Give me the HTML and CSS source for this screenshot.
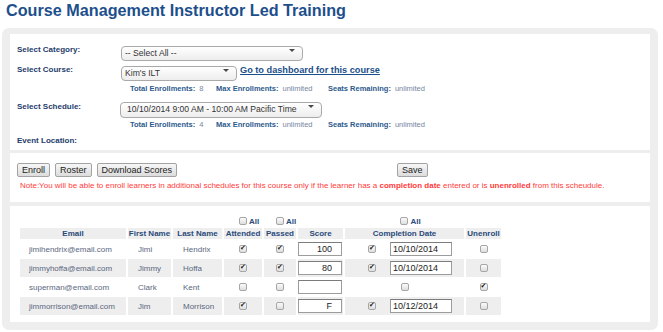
FILE: index.html
```html
<!DOCTYPE html>
<html>
<head>
<meta charset="utf-8">
<title>Course Management Instructor Led Training</title>
<link rel="stylesheet" href="styles.css">
</head>
<body>
<h1 class="title">Course Management Instructor Led Training</h1>
<div class="panel">
  <div class="section s-form">
    <div class="row r-cat">
      <label class="lbl">Select Category:</label>
      <span class="selwrap w-cat"><select class="sel"><option>-- Select All --</option></select></span>
    </div>
    <div class="row r-course">
      <label class="lbl">Select Course:</label>
      <span class="selwrap w-course"><select class="sel"><option>Kim's ILT</option></select></span>
      <a class="dash" href="#">Go to dashboard for this course</a>
    </div>
    <div class="totals t1">
      <span class="grp g1"><span class="tl">Total Enrollments:</span><span class="tv">8</span></span>
      <span class="grp g2"><span class="tl">Max Enrollments:</span><span class="tv">unlimited</span></span>
      <span class="grp"><span class="tl">Seats Remaining:</span><span class="tv">unlimited</span></span>
    </div>
    <div class="row r-sched">
      <label class="lbl">Select Schedule:</label>
      <span class="selwrap w-sched"><select class="sel sched"><option>10/10/2014 9:00 AM - 10:00 AM Pacific Time</option></select></span>
    </div>
    <div class="totals t2">
      <span class="grp g1"><span class="tl">Total Enrollments:</span><span class="tv">4</span></span>
      <span class="grp g2"><span class="tl">Max Enrollments:</span><span class="tv">unlimited</span></span>
      <span class="grp"><span class="tl">Seats Remaining:</span><span class="tv">unlimited</span></span>
    </div>
    <div class="row r-event">
      <label class="lbl">Event Location:</label>
    </div>
  </div>

  <div class="section s-actions">
    <div class="btnrow">
      <button class="btn">Enroll</button>
      <button class="btn">Roster</button>
      <button class="btn">Download Scores</button>
      <button class="btn save">Save</button>
    </div>
    <p class="note">Note:You will be able to enroll learners in additional schedules for this course only if the learner has a <b>completion date</b> entered or is <b>unenrolled</b> from this scheudule.</p>
  </div>

  <div class="section s-table">
    <table class="grid">
      <colgroup>
        <col class="c-email"><col class="c-first"><col class="c-last"><col class="c-att"><col class="c-pass"><col class="c-score"><col class="c-date"><col class="c-un">
      </colgroup>
      <tr class="allrow">
        <td></td><td></td><td></td>
        <td class="all"><input type="checkbox" class="cb"><span>All</span></td>
        <td class="all"><input type="checkbox" class="cb"><span>All</span></td>
        <td></td>
        <td class="all"><input type="checkbox" class="cb"><span>All</span></td>
        <td></td>
      </tr>
      <tr class="head">
        <th>Email</th><th>First Name</th><th>Last Name</th><th>Attended</th><th>Passed</th><th>Score</th><th>Completion Date</th><th>Unenroll</th>
      </tr>
      <tr class="data">
        <td class="txt em">jimihendrix@email.com</td><td class="txt">Jimi</td><td class="txt">Hendrix</td>
        <td class="ctr"><input type="checkbox" class="cb" checked></td>
        <td class="ctr"><input type="checkbox" class="cb" checked></td>
        <td><input class="score" type="text" value="100"></td>
        <td class="dt"><input type="checkbox" class="cb" checked><input class="date" type="text" value="10/10/2014"></td>
        <td class="ctr"><input type="checkbox" class="cb"></td>
      </tr>
      <tr class="data alt">
        <td class="txt em">jimmyhoffa@email.com</td><td class="txt">Jimmy</td><td class="txt">Hoffa</td>
        <td class="ctr"><input type="checkbox" class="cb" checked></td>
        <td class="ctr"><input type="checkbox" class="cb" checked></td>
        <td><input class="score" type="text" value="80"></td>
        <td class="dt"><input type="checkbox" class="cb" checked><input class="date" type="text" value="10/10/2014"></td>
        <td class="ctr"><input type="checkbox" class="cb"></td>
      </tr>
      <tr class="data">
        <td class="txt em">superman@email.com</td><td class="txt">Clark</td><td class="txt">Kent</td>
        <td class="ctr"><input type="checkbox" class="cb"></td>
        <td class="ctr"><input type="checkbox" class="cb"></td>
        <td><input class="score" type="text" value=""></td>
        <td class="ctr"><input type="checkbox" class="cb"></td>
        <td class="ctr"><input type="checkbox" class="cb" checked></td>
      </tr>
      <tr class="data alt">
        <td class="txt em">jimmorrison@email.com</td><td class="txt">Jim</td><td class="txt">Morrison</td>
        <td class="ctr"><input type="checkbox" class="cb" checked></td>
        <td class="ctr"><input type="checkbox" class="cb"></td>
        <td><input class="score" type="text" value="F"></td>
        <td class="dt"><input type="checkbox" class="cb" checked><input class="date" type="text" value="10/12/2014"></td>
        <td class="ctr"><input type="checkbox" class="cb"></td>
      </tr>
    </table>
  </div>
</div>
</body>
</html>
```
FILE: styles.css
```css
* { box-sizing: border-box; }
html, body { margin: 0; padding: 0; background: #fff; }
body {
  font-family: "Liberation Sans", Arial, sans-serif;
  width: 663px;
  color: #333;
}
.title {
  margin: 0 0 8px 0;
  padding: 0 0 0 6px;
  font-size: 16.2px;
  line-height: 20px;
  font-weight: bold;
  color: #1d4f8c;
}
.panel {
  margin-left: 2px;
  width: 656px;
  background: #eeeeee;
  border-radius: 7px;
  padding: 6px 8px 8px 8px;
}
.section { background: #fff; }
.s-actions { margin-top: 3px; }
.s-table { margin-top: 4px; }

/* form section */
.s-form { padding: 8px 7px 5px 7px; height: 116px; }
.row { display: flex; align-items: center; }
.lbl {
  width: 104px;
  flex: none;
  font-size: 8px;
  font-weight: bold;
  color: #1f3d6b;
}
.r-cat { height: 15px; }
.r-course { height: 15px; margin-top: 5px; }
.r-sched { height: 16px; margin-top: 4px; }
.r-event { height: 10px; margin-top: 5px; }
.selwrap { position: relative; display: block; height: 100%; }
.selwrap::after {
  content: "";
  position: absolute;
  right: 8px;
  top: 50%;
  margin-top: -1px;
  border-left: 3px solid transparent;
  border-right: 3px solid transparent;
  border-top: 3px solid #4a4a4a;
}
.w-cat { width: 182px; }
.w-course { width: 116px; }
.w-sched { width: 202px; margin-left: -1px; }
.sel {
  -webkit-appearance: none;
  appearance: none;
  width: 100%;
  height: 100%;
  margin: 0;
  border: 1px solid #a9a9a9;
  border-radius: 4px;
  background: linear-gradient(#ffffff, #ededed);
  font-family: "Liberation Sans", Arial, sans-serif;
  font-size: 8.6px;
  color: #333;
  padding: 0 0 0 3px;
  line-height: 13px;
}
.sel.sched { padding-left: 6px; }
.dash {
  margin-left: 3px;
  font-size: 9.2px;
  font-weight: bold;
  color: #1a4f8a;
  text-decoration: underline;
}
.totals {
  margin-left: 113px;
  height: 10px;
  line-height: 10px;
  font-size: 7.5px;
  display: flex;
  align-items: center;
  white-space: nowrap;
}
.t1 { margin-top: 7px; }
.t2 { margin-top: 6px; }
.grp { display: block; flex: none; }
.g1 { width: 86px; }
.g2 { width: 112px; }
.tl { font-weight: bold; color: #2c5a8c; margin-right: 4px; }
.tv { color: #7686a0; }

/* actions section */
.s-actions { padding: 10px 7px 0 7px; height: 49px; }
.btnrow { display: flex; height: 14px; }
.btn {
  height: 14px;
  margin: 0 5px 0 0;
  padding: 0 4px;
  border: 1px solid #a3a3a3;
  border-radius: 2px;
  background: linear-gradient(#f7f7f7, #dcdcdc);
  font-family: "Liberation Sans", Arial, sans-serif;
  font-size: 9px;
  line-height: 12px;
  color: #222;
}
.btn.save { margin-left: 215px; }
.note {
  margin: 4px 0 0 3px;
  font-size: 8px;
  line-height: 10px;
  color: #ff3b3b;
}

/* table section */
.s-table { padding: 8px 0 6px 8px; height: 116px; }
.grid {
  table-layout: fixed;
  width: 485px;
  border-collapse: separate;
  border-spacing: 2px 1px;
  font-size: 8px;
}
.c-email { width: 106px; }
.c-first { width: 43px; }
.c-last { width: 49px; }
.c-att { width: 38px; }
.c-pass { width: 32px; }
.c-score { width: 45px; }
.c-date { width: 119px; }
.c-un { width: 35px; }
.grid td, .grid th { padding: 0; vertical-align: middle; }
.allrow td { height: 12px; }
.all {
  text-align: center;
  padding-left: 12px !important;
  white-space: nowrap;
  font-weight: bold;
  color: #2a4a7a;
}
.all span { margin-left: 2px; vertical-align: middle; }
.head th {
  height: 11px;
  background: #eeeeee;
  font-weight: bold;
  color: #2a4a7a;
  text-align: center;
  white-space: nowrap;
  line-height: 11px;
}
.data td { height: 18px; }
.data.alt td { background: #eeeeee; }
.txt { padding-left: 10px !important; color: #5a6780; white-space: nowrap; }
.txt.em { padding-left: 9px !important; }
.ctr { text-align: center; }
.dt { padding-left: 23px !important; white-space: nowrap; }
.dt .date { margin-left: 14px; }

.cb {
  -webkit-appearance: none;
  appearance: none;
  width: 8px;
  height: 8px;
  margin: 0;
  border: 1px solid #a6a6a6;
  border-radius: 2px;
  background: linear-gradient(#fbfbfb, #dedede);
  vertical-align: middle;
  position: relative;
  display: inline-block;
}
.cb:checked::after {
  content: "\2714";
  position: absolute;
  left: 0px;
  top: -2px;
  font-family: "DejaVu Sans", sans-serif;
  font-size: 7px;
  line-height: 9px;
  color: #222;
}
.score, .date {
  height: 14px;
  margin: 0;
  border: 1px solid #9c9c9c;
  border-top-color: #7c7c7c;
  background: #fff;
  font-family: "Liberation Sans", Arial, sans-serif;
  font-size: 9px;
  color: #222;
  vertical-align: middle;
}
.score {
  display: block;
  width: 44px;
  text-align: right;
  padding: 0 9px 0 0;
}
.date {
  width: 62px;
  padding: 0 0 0 2px;
}
```
